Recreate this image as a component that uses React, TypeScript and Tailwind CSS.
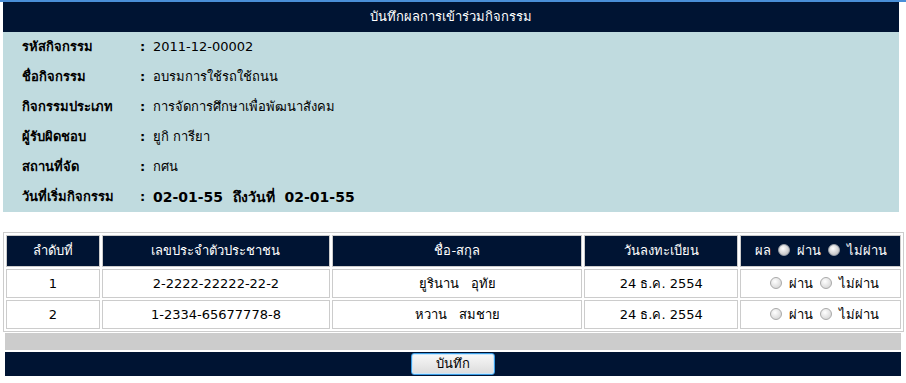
import React from "react";

const font = { fontFamily: 'Tahoma, "DejaVu Sans", "Noto Sans", sans-serif' };

function Radio({ dark }: { dark?: boolean }) {
  return (
    <span
      className={
        "inline-block w-[12px] h-[12px] mx-[7px] rounded-full border align-[-1px] " +
        (dark
          ? "border-[#9aa0a8] bg-[radial-gradient(circle_at_40%_35%,#ffffff,#c8c8c8_70%)]"
          : "border-[#a9a9a9] bg-[radial-gradient(circle_at_40%_35%,#ffffff,#dcdcdc_70%)]")
      }
    />
  );
}

const info: [string, string, boolean?][] = [
  ["รหัสกิจกรรม", "2011-12-00002"],
  ["ชื่อกิจกรรม", "อบรมการใช้รถใช้ถนน"],
  ["กิจกรรมประเภท", "การจัดการศึกษาเพื่อพัฒนาสังคม"],
  ["ผู้รับผิดชอบ", "ยูกิ การียา"],
  ["สถานที่จัด", "กศน"],
  ["วันที่เริ่มกิจกรรม", "02-01-55  ถึงวันที่  02-01-55", true],
];

const rows = [
  ["1", "2-2222-22222-22-2", "ยูรินาน   อุทัย", "24 ธ.ค. 2554"],
  ["2", "1-2334-65677778-8", "หวาน   สมชาย", "24 ธ.ค. 2554"],
];

export default function App() {
  return (
    <div className="w-[906px] h-[383px] bg-white text-[13px] text-black" style={font}>
      <div className="h-[2px] bg-[#4a8fd8]" />
      <div className="ml-[3px] w-[896px]">
        <div className="h-[30px] bg-[#001433] text-white flex items-center justify-center">
          บันทึกผลการเข้าร่วมกิจกรรม
        </div>
        <div className="bg-[#c0dbdf] h-[180px]">
          {info.map(([k, v, big]) => (
            <div key={k} className="h-[30px] flex items-center pl-[19px]">
              <div className="w-[118px] font-bold">{k}</div>
              <div className="w-[13px] font-bold">:</div>
              <div className={big ? "font-bold text-[14px] whitespace-pre" : "whitespace-pre"}>{v}</div>
            </div>
          ))}
        </div>
      </div>

      <table className="ml-[3px] mt-[20px] w-[901px] border border-[#cccccc] border-separate border-spacing-[2px] text-center">
        <colgroup>
          <col className="w-[94px]" />
          <col className="w-[229px]" />
          <col className="w-[251px]" />
          <col className="w-[154px]" />
          <col className="w-[161px]" />
        </colgroup>
        <thead>
          <tr className="h-[32px] text-white">
            <th className="font-normal bg-[#001433] border border-[#cccccc]">ลำดับที่</th>
            <th className="font-normal bg-[#001433] border border-[#cccccc]">เลขประจำตัวประชาชน</th>
            <th className="font-normal bg-[#001433] border border-[#cccccc]">ชื่อ-สกุล</th>
            <th className="font-normal bg-[#001433] border border-[#cccccc]">วันลงทะเบียน</th>
            <th className="font-normal bg-[#001433] border border-[#cccccc] whitespace-nowrap">
              ผล<Radio dark />ผ่าน<Radio dark />ไม่ผ่าน
            </th>
          </tr>
        </thead>
        <tbody>
          {rows.map((r) => (
            <tr key={r[0]} className="h-[29px]">
              {r.map((c, i) => (
                <td key={i} className="border border-[#cccccc] whitespace-pre">{c}</td>
              ))}
              <td className="border border-[#cccccc] whitespace-nowrap">
                <Radio />ผ่าน<Radio />ไม่ผ่าน
              </td>
            </tr>
          ))}
        </tbody>
      </table>

      <div className="ml-[5px] w-[896px] mt-[1px] h-[17px] bg-[#cccccc]" />
      <div className="ml-[5px] w-[896px] mt-[2px] h-[24px] bg-[#001433] flex items-center justify-center">
        <button className="w-[84px] h-[22px] rounded-[3px] border border-[#3c9ee6] bg-[linear-gradient(#f8f8f8,#dcdcdc)] text-[13px] text-black shadow-[inset_0_0_0_1px_#c8e6fb]">
          บันทึก
        </button>
      </div>
    </div>
  );
}
